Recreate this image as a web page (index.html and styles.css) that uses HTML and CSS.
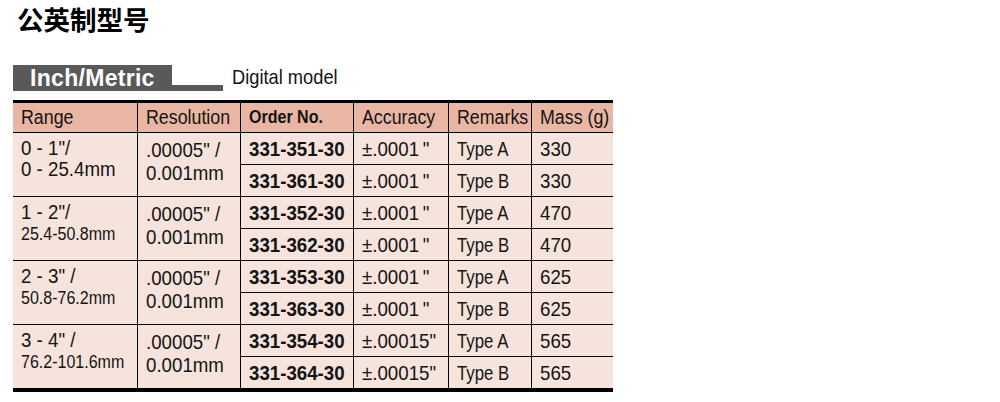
FILE: index.html
```html
<!DOCTYPE html>
<html>
<head>
<meta charset="utf-8">
<link rel="stylesheet" href="styles.css">
</head>
<body>
<h1 class="title">公英制型号</h1>
<div class="banner">
  <div class="banner-box">Inch/Metric</div>
  <div class="banner-tail"></div>
  <div class="banner-label"><span class="sx">Digital model</span></div>
</div>
<table class="spec">
  <colgroup>
    <col class="c1"><col class="c2"><col class="c3"><col class="c4"><col class="c5"><col class="c6">
  </colgroup>
  <thead>
    <tr>
      <th class="first"><span class="sx">Range</span></th>
      <th><span class="sx">Resolution</span></th>
      <th class="order-h"><span class="sx">Order No.</span></th>
      <th><span class="sx">Accuracy</span></th>
      <th><span class="sx">Remarks</span></th>
      <th><span class="sx">Mass (g)</span></th>
    </tr>
  </thead>
  <tbody>
    <tr>
      <td rowspan="2" class="first grp"><span class="sx">0 - 1"/<br>0 - 25.4mm</span></td>
      <td rowspan="2" class="grp res"><span class="sx">.00005" /<br>0.001mm</span></td>
      <td class="order"><span class="sx">331-351-30</span></td><td><span class="sx">±.0001&thinsp;"</span></td><td class="type"><span class="sx">Type A</span></td><td><span class="sx">330</span></td>
    </tr>
    <tr>
      <td class="order"><span class="sx">331-361-30</span></td><td><span class="sx">±.0001&thinsp;"</span></td><td class="type"><span class="sx">Type B</span></td><td><span class="sx">330</span></td>
    </tr>
    <tr>
      <td rowspan="2" class="first grp"><span class="sx">1 - 2"/<br><span class="small">25.4-50.8mm</span></span></td>
      <td rowspan="2" class="grp res"><span class="sx">.00005" /<br>0.001mm</span></td>
      <td class="order"><span class="sx">331-352-30</span></td><td><span class="sx">±.0001&thinsp;"</span></td><td class="type"><span class="sx">Type A</span></td><td><span class="sx">470</span></td>
    </tr>
    <tr>
      <td class="order"><span class="sx">331-362-30</span></td><td><span class="sx">±.0001&thinsp;"</span></td><td class="type"><span class="sx">Type B</span></td><td><span class="sx">470</span></td>
    </tr>
    <tr>
      <td rowspan="2" class="first grp"><span class="sx">2 - 3" /<br><span class="small">50.8-76.2mm</span></span></td>
      <td rowspan="2" class="grp res"><span class="sx">.00005" /<br>0.001mm</span></td>
      <td class="order"><span class="sx">331-353-30</span></td><td><span class="sx">±.0001&thinsp;"</span></td><td class="type"><span class="sx">Type A</span></td><td><span class="sx">625</span></td>
    </tr>
    <tr>
      <td class="order"><span class="sx">331-363-30</span></td><td><span class="sx">±.0001&thinsp;"</span></td><td class="type"><span class="sx">Type B</span></td><td><span class="sx">625</span></td>
    </tr>
    <tr>
      <td rowspan="2" class="first grp last"><span class="sx">3 - 4" /<br><span class="small">76.2-101.6mm</span></span></td>
      <td rowspan="2" class="grp res last"><span class="sx">.00005" /<br>0.001mm</span></td>
      <td class="order"><span class="sx">331-354-30</span></td><td><span class="sx">±.00015"</span></td><td class="type"><span class="sx">Type A</span></td><td><span class="sx">565</span></td>
    </tr>
    <tr class="lastrow">
      <td class="order"><span class="sx">331-364-30</span></td><td><span class="sx">±.00015"</span></td><td class="type"><span class="sx">Type B</span></td><td><span class="sx">565</span></td>
    </tr>
  </tbody>
</table>
</body>
</html>
```

FILE: styles.css
```css
html, body {
  margin: 0;
  padding: 0;
  background: #ffffff;
}

body {
  width: 1000px;
  height: 402px;
  overflow: hidden;
  font-family: "Liberation Sans", Arial, sans-serif;
  color: #141414;
}

.sx {
  display: block;
  white-space: nowrap;
  transform: scaleX(0.89);
  transform-origin: 0 50%;
}

.title {
  margin: 0;
  padding: 3px 0 0 17px;
  height: 65px;
  box-sizing: border-box;
  font-family: "Noto Sans CJK SC", sans-serif;
  font-weight: 700;
  font-size: 26.5px;
  line-height: 32px;
  color: #000;
}

.banner {
  display: flex;
  align-items: flex-end;
  margin-left: 13px;
  height: 26px;
}

.banner-box {
  width: 159px;
  height: 26px;
  background: #595959;
  color: #ffffff;
  font-weight: 700;
  font-size: 23px;
  letter-spacing: 0.3px;
  line-height: 26px;
  padding-left: 17px;
  box-sizing: border-box;
}

.banner-tail {
  width: 51px;
  height: 6px;
  background: #595959;
}

.banner-label {
  align-self: flex-start;
  margin-left: 9px;
  width: 130px;
  font-size: 21px;
  line-height: 24px;
  color: #141414;
}

.banner-label .sx {
  transform: scaleX(0.87);
}

.spec {
  margin: 9px 0 0 13px;
  width: 600px;
  table-layout: fixed;
  border-collapse: separate;
  border-spacing: 0;
  border-top: 3px solid #000;
  border-bottom: 4px solid #000;
}

.c1 { width: 124px; }
.c2 { width: 103px; }
.c3 { width: 113px; }
.c4 { width: 95px; }
.c5 { width: 83px; }
.c6 { width: 82px; }

.spec th,
.spec td {
  padding: 0 0 0 8px;
  border-left: 1px solid #000;
  border-bottom: 1px solid #000;
  text-align: left;
  white-space: nowrap;
  overflow: hidden;
}

.spec th.first,
.spec td.first {
  border-left: none;
}

.spec th {
  height: 29px;
  background: #e8b6a3;
  font-weight: 400;
  font-size: 20px;
  line-height: 29px;
  vertical-align: middle;
}

.spec th.order-h {
  font-weight: 700;
  font-size: 18px;
}

.spec td {
  height: 31px;
  background: #f6e3db;
  font-size: 21px;
  line-height: 31px;
  vertical-align: middle;
}

.spec td.grp {
  vertical-align: top;
  line-height: 21px;
  padding-top: 4px;
  box-sizing: border-box;
}

.spec td.res {
  line-height: 23px;
  padding-top: 5px;
}

.spec td.order {
  font-weight: 700;
}

.spec td.type .sx {
  transform: scaleX(0.8);
}

.small {
  font-size: 18px;
}

.spec td.last,
.spec tr.lastrow td {
  border-bottom: none;
}
```
